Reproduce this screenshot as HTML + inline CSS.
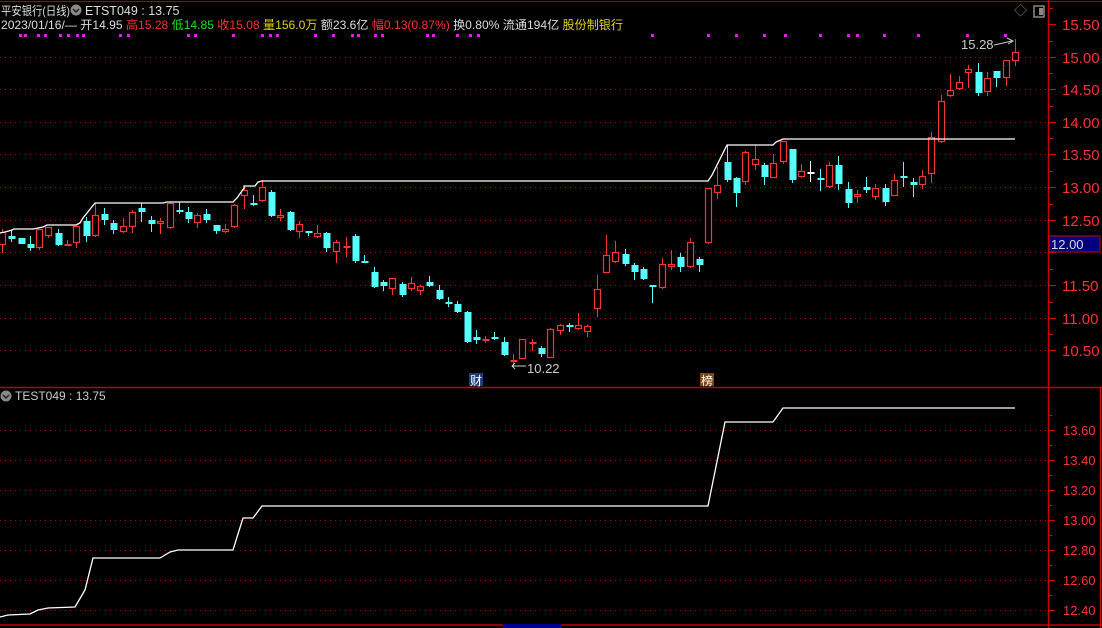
<!DOCTYPE html>
<html><head><meta charset="utf-8"><style>
html,body{margin:0;padding:0;background:#000;width:1102px;height:628px;overflow:hidden}
svg{display:block}
text{font-family:"Liberation Sans","Noto Sans CJK SC",sans-serif}
</style></head><body>
<svg id="s" width="1102" height="628" xmlns="http://www.w3.org/2000/svg">
<rect width="1102" height="628" fill="#000"/>
<g id="grid"></g>
<g id="cand"></g>
<polyline fill="none" stroke="#fff" stroke-width="1.3" points="0,233 5,232 12,230 14,229 33,229 38,228 43,227 47,225 76,225 80,223 83,218 95,203 163,203 167,202 233,202 237,198 244,188 244,186 255,186 258,182 262,181 708,181 712,175 727,145 773,145 776,142 783,139 1015,139"/>
<polyline fill="none" stroke="#fff" stroke-width="1.3" points="0,617 8,615 30,614 38,610 48,608 75,607 85,590 93,558 160,558 170,552 178,550 233,550 243,518 253,518 262,506 708,506 725,422 773,422 783,408 1015,408"/>
<line x1="0" y1="1.5" x2="1102" y2="1.5" stroke="#a00" stroke-width="1"/>
<line x1="1048.5" y1="0" x2="1048.5" y2="628" stroke="#c00" stroke-width="1.5"/>
<line x1="0" y1="387.5" x2="1102" y2="387.5" stroke="#b00" stroke-width="1.5"/>
<line x1="0" y1="625" x2="1102" y2="625" stroke="#b00" stroke-width="1.5"/>
<line x1="1100.5" y1="387" x2="1100.5" y2="628" stroke="#c00" stroke-width="1.5"/>
<rect x="503" y="624" width="58" height="4" fill="#000090"/>
<g id="axis"></g>
<rect x="1049" y="236" width="51" height="16" fill="#000080" stroke="#c00" stroke-width="1"/>
<text x="1051" y="249" font-size="13" fill="#ddd">12.00</text>
<text x="1" y="15" font-size="12" fill="#ddd" textLength="69" lengthAdjust="spacingAndGlyphs">平安银行(日线)</text>
<circle cx="76" cy="10" r="5.5" fill="#888"/><path d="M73,9 l3,3 l3,-3" stroke="#222" stroke-width="1.5" fill="none"/>
<text x="85" y="15" font-size="12.5" fill="#ddd">ETST049 : 13.75</text>
<text x="1" y="29" font-size="12" fill="#ddd" textLength="622" lengthAdjust="spacingAndGlyphs">2023/01/16/— 开14.95 <tspan fill="#ff3030">高15.28</tspan> <tspan fill="#20e020">低14.85</tspan> <tspan fill="#ff3030">收15.08</tspan> <tspan fill="#e0d020">量156.0万</tspan> 额23.6亿 <tspan fill="#ff3030">幅0.13(0.87%)</tspan> 换0.80% 流通194亿 <tspan fill="#e0d020">股份制银行</tspan></text>
<g id="dots" fill="#e020e0"></g>
<text x="1014" y="15" font-size="13" fill="#888">◇</text>
<rect x="1034" y="6" width="10" height="11" fill="none" stroke="#888" stroke-width="1.5"/><rect x="1039" y="8" width="4" height="7" fill="#888"/>
<circle cx="6" cy="396" r="5.5" fill="#888"/><path d="M3,395 l3,3 l3,-3" stroke="#222" stroke-width="1.5" fill="none"/>
<text x="15" y="400" font-size="12" fill="#ccc">TEST049 : 13.75</text>
<text x="961" y="49" font-size="13" fill="#ccc">15.28</text>
<path d="M994,45 L1012,41 M1007,38 L1013,41 L1008,44" stroke="#ccc" fill="none"/>
<path d="M512,366 L526,366 M515,363 L512,366 L515,369" stroke="#ccc" fill="none"/>
<text x="527" y="373" font-size="13" fill="#ccc">10.22</text>
<rect x="469" y="373" width="14" height="13" fill="#1a3f7a"/><text x="470" y="385" font-size="12" fill="#fff">财</text>
<rect x="700" y="373" width="14" height="13" fill="#7a4a10"/><text x="701" y="385" font-size="12" fill="#fff">榜</text>
</svg>
<script>
(function(){
var NS="http://www.w3.org/2000/svg";
function el(p,t,a){var e=document.createElementNS(NS,t);for(var k in a){if(k!='txt')e.setAttribute(k,a[k]);}if(a.txt)e.textContent=a.txt;p.appendChild(e);return e;}
var g=document.getElementById('grid'),ax=document.getElementById('axis');
var T=[["15.50",24],["15.00",57],["14.50",89],["14.00",122],["13.50",154],["13.00",187],["12.50",220],["12.00",252],["11.50",285],["11.00",318],["10.50",350]];
T.forEach(function(v){if(v[0]!="15.50")el(g,'line',{x1:0,y1:v[1]+.5,x2:1046,y2:v[1]+.5,stroke:'#a01010','stroke-dasharray':'1 4'});
el(ax,'line',{x1:1049,y1:v[1]+.5,x2:1056,y2:v[1]+.5,stroke:'#d00'});el(ax,'line',{x1:1049,y1:v[1]-15.5,x2:1053,y2:v[1]-15.5,stroke:'#d00'});
if(v[0]!="12.00")el(ax,'text',{x:1062,y:v[1]+6,'font-size':15,fill:'#ff3030',txt:v[0]});});
var B=[["13.60",430],["13.40",460],["13.20",490],["13.00",520],["12.80",550],["12.60",580],["12.40",610]];
B.forEach(function(v){el(g,'line',{x1:0,y1:v[1]+.5,x2:1046,y2:v[1]+.5,stroke:'#a01010','stroke-dasharray':'1 4'});
el(ax,'line',{x1:1049,y1:v[1]+.5,x2:1055,y2:v[1]+.5,stroke:'#d00'});el(ax,'line',{x1:1049,y1:v[1]-14.5,x2:1052,y2:v[1]-14.5,stroke:'#d00'});
el(ax,'text',{x:1063,y:v[1]+5,'font-size':13,fill:'#ff3030',txt:v[0]});});
var C=[[2,232,245,229,253,'r'],[11,236,239,230,242,'c'],[21,238,244,238,244,'c'],[30,244,248,236,251,'c'],[39,229,248,229,250,'r'],[48,227,236,227,238,'r'],[58,233,245,229,246,'c'],[67,244,246,240,246,'r'],[76,226,243,226,248,'r'],[86,221,236,217,242,'c'],
[95,215,236,203,237,'r'],[104,214,220,208,225,'c'],[113,223,230,220,234,'c'],[123,226,232,218,233,'r'],[132,212,227,210,233,'r'],[141,208,212,203,222,'c'],[151,220,224,216,232,'c'],[160,221,224,218,234,'r'],[170,203,228,202,229,'r'],[179,210,212,202,214,'c'],
[188,212,219,207,223,'c'],[197,215,223,213,228,'r'],[206,214,220,209,223,'c'],[216,225,231,225,234,'c'],[225,229,232,224,233,'r'],[234,205,227,204,228,'r'],[244,190,196,187,209,'r'],[253,203,205,195,206,'c'],[262,187,201,180,202,'r'],[271,192,216,190,217,'c'],
[280,215,218,209,221,'r'],[290,212,230,211,231,'c'],[299,224,232,221,238,'r'],[308,231,233,231,236,'c'],[317,233,237,225,238,'r'],[326,233,248,232,252,'c'],[336,242,252,240,263,'r'],[346,246,247,237,257,'r'],[355,236,261,234,263,'c'],[364,261,263,255,263,'c'],
[374,272,287,267,288,'c'],[383,282,286,280,291,'c'],[392,278,289,278,295,'r'],[402,284,295,282,297,'c'],[411,283,289,277,291,'r'],[420,286,291,285,295,'r'],[429,282,286,276,287,'c'],[439,290,299,285,300,'c'],[448,302,303,297,307,'c'],[457,304,312,301,313,'c'],
[467,312,342,311,343,'c'],[476,337,340,330,344,'c'],[485,339,341,336,343,'r'],[494,337,338,332,340,'c'],[504,342,355,337,356,'c'],[513,360,362,354,367,'r'],[522,339,359,339,359,'r'],[532,342,344,339,351,'r'],[541,348,354,346,357,'c'],[550,329,358,328,358,'r'],
[560,325,331,324,335,'r'],[569,325,327,323,332,'c'],[578,325,329,313,330,'r'],[587,326,332,325,337,'r'],[597,289,309,275,317,'r'],[606,255,273,235,273,'r'],[615,252,262,241,263,'r'],[625,254,264,249,266,'c'],[634,265,272,263,280,'c'],[643,269,279,267,280,'c'],
[652,285,287,285,303,'c'],[662,264,288,258,289,'r'],[671,264,267,250,270,'r'],[680,257,267,253,272,'c'],[690,242,267,238,268,'r'],[699,259,265,257,272,'c'],[708,188,243,188,244,'r'],[717,185,193,167,199,'r'],[727,162,180,145,182,'c'],[736,178,193,177,207,'c'],
[745,152,182,151,185,'r'],[755,159,165,145,170,'r'],[764,165,177,163,185,'c'],[773,163,178,154,178,'r'],[783,141,162,141,164,'r'],[792,149,180,149,183,'c'],[801,171,177,164,178,'r'],[810,172,173,161,182,'w'],[820,178,180,169,191,'c'],[829,165,187,162,188,'r'],
[838,165,184,156,190,'c'],[848,189,203,182,208,'c'],[857,194,197,190,203,'r'],[866,187,190,177,193,'c'],[875,188,197,184,200,'r'],[885,188,202,184,206,'c'],[894,180,196,174,196,'r'],[903,176,178,162,187,'c'],[913,182,185,178,197,'c'],[922,176,185,170,189,'r'],
[931,137,174,132,183,'r'],[941,101,142,95,143,'r'],[950,90,96,74,97,'r'],[959,82,89,76,90,'r'],[968,69,73,65,88,'r'],[978,72,93,63,96,'c'],[987,78,92,72,96,'r'],[996,71,78,71,87,'c'],[1006,60,78,60,86,'r'],[1015,52,61,39,66,'r']];
var cg=document.getElementById('cand');
var col={r:'#ff3232',c:'#54ffff',w:'#ffffff'};
C.forEach(function(c){var x=c[0],cl=col[c[5]];
el(cg,'line',{x1:x+.5,y1:c[3],x2:x+.5,y2:c[4],stroke:cl,'stroke-width':1});
var h=Math.max(1,c[2]-c[1]);
if(c[5]=='r'&&h>2){el(cg,'rect',{x:x-2.5,y:c[1]+.5,width:6,height:h-1,fill:'#000',stroke:cl,'stroke-width':1.2});}
else el(cg,'rect',{x:x-2.5,y:c[1],width:7,height:(c[5]=='r'?2:h<2?2:h),fill:cl});});
var d=document.getElementById('dots');
[20,25,38,45,60,68,77,83,120,128,188,195,233,262,270,277,315,333,352,358,375,382,427,433,457,470,478,652,708,736,764,785,820,848,857,884,918,967,1005].forEach(function(x){el(d,'rect',{x:x-1,y:34,width:3,height:3});});
})();
</script>
</body></html>
